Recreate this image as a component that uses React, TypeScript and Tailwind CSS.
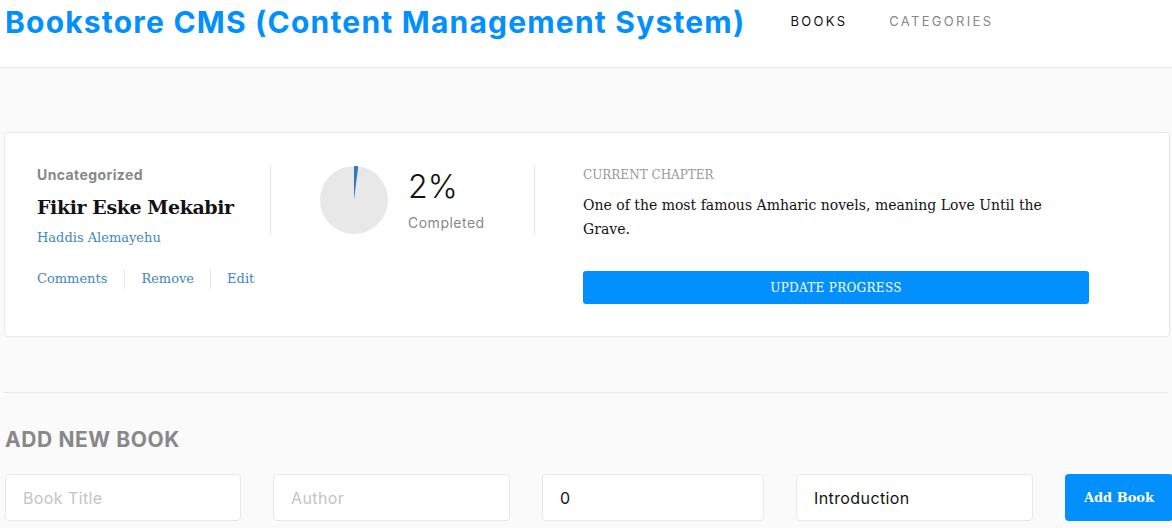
import React from 'react'

const slab = "font-['DejaVu_Serif',serif]"
const geo = "font-['Inter',sans-serif]"

function Pie({ percent }: { percent: number }) {
  const r = 34
  const c = 35
  const a = (percent / 100) * Math.PI * 2
  const x = c + r * Math.sin(a)
  const y = c - r * Math.cos(a)
  return (
    <svg width="70" height="70" viewBox="0 0 70 70">
      <circle cx={c} cy={c} r={r} fill="#e8e8e8" />
      <path d={`M${c} ${c} L${c} ${c - r} A${r} ${r} 0 0 1 ${x} ${y} Z`} fill="#307bbe" />
    </svg>
  )
}

const inputs = [
  { label: 'Book Title', value: '', w: 'w-[236px]' },
  { label: 'Author', value: '', w: 'w-[237px]' },
  { label: '', value: '0', w: 'w-[222px]' },
  { label: '', value: 'Introduction', w: 'w-[237px]' },
]

export default function App() {
  return (
    <div className="min-h-[528px] w-[1172px] bg-[#fafafa] overflow-hidden">
      <header className="h-[68px] bg-white border-b border-[#e8e8e8] flex items-start pl-[5px] pt-[4px]">
        <h1 className={`${geo} shrink-0 text-[30px] font-bold text-[#0290ff] leading-[36px] tracking-[1.2px] whitespace-nowrap`}>
          Bookstore CMS (Content Management System)
        </h1>
        <nav className={`${geo} flex gap-[42px] ml-[45px] mt-[8px] text-[13px] tracking-[2.3px] whitespace-nowrap`}>
          <span className="text-[#121212]">BOOKS</span>
          <span className="text-[#888]">CATEGORIES</span>
        </nav>
      </header>

      <main className="px-[4px]">
        <div className="mt-[64px] h-[205px] w-[1166px] bg-white border border-[#e8e8e8] rounded-[4px] flex items-start pt-[32px] pl-[32px]">
          <div className="w-[234px] border-r border-[#e8e8e8] h-[70px] flex flex-col">
            <span className={`${geo} text-[14px] font-bold text-[#888] leading-[18px] mt-[1px] tracking-[0.4px]`}>Uncategorized</span>
            <span className={`${slab} text-[19px] font-bold text-[#121212] leading-[24px] mt-[11px] tracking-[-0.4px] whitespace-nowrap`}>Fikir Eske Mekabir</span>
            <span className={`${slab} text-[13px] font-light text-[#4386bf] leading-[18px] mt-[10px]`}>Haddis Alemayehu</span>
            <div className={`${slab} flex items-center text-[13px] text-[#4386bf] mt-[22px] leading-[20px] whitespace-nowrap`}>
              <span className="pr-[17px] border-r border-[#e8e8e8]">Comments</span>
              <span className="px-[16px] border-r border-[#e8e8e8]">Remove</span>
              <span className="pl-[16px]">Edit</span>
            </div>
          </div>

          <div className="w-[264px] h-[70px] border-r border-[#e8e8e8] flex items-center pl-[48px]">
            <Pie percent={2} />
            <div className="ml-[19px] flex flex-col">
              <span className={`${geo} text-[32px] font-light text-[#121212] leading-[38px]`}>2%</span>
              <span className={`${geo} text-[14px] text-[#888] leading-[18px] mt-[8px] tracking-[0.5px]`}>Completed</span>
            </div>
          </div>

          <div className="pl-[48px] w-[554px]">
            <div className={`${slab} text-[12px] font-light text-[#999] leading-[16px] mt-[2px]`}>CURRENT CHAPTER</div>
            <div className={`${slab} text-[14px] font-light text-[#121212] leading-[24px] mt-[10px] w-[480px]`}>
              One of the most famous Amharic novels, meaning Love Until the Grave.
            </div>
            <button className={`${slab} mt-[30px] w-[506px] h-[33px] bg-[#0290ff] rounded-[3px] text-white text-[12px] font-light tracking-[0.3px]`}>
              UPDATE PROGRESS
            </button>
          </div>
        </div>

        <div className="mt-[55px] border-t border-[#e8e8e8]" />

        <h2 className={`${geo} mt-[33px] pl-[1px] text-[21px] font-bold text-[#888] leading-[28px] tracking-[0.6px]`}>ADD NEW BOOK</h2>

        <form className="mt-[20px] flex gap-[32px] pl-[1px]">
          {inputs.map((f, i) => (
            <div
              key={i}
              className={`${f.w} ${geo} shrink-0 h-[47px] bg-white border border-[#e8e8e8] rounded-[4px] flex items-center pl-[17px] text-[16px] tracking-[0.4px] ${f.value ? 'text-[#121212]' : 'text-[#c4c4c4]'}`}
            >
              {f.value || f.label}
            </div>
          ))}
          <button className={`${slab} shrink-0 w-[108px] h-[47px] bg-[#0290ff] rounded-[4px] text-white text-[13px] font-bold`}>
            Add Book
          </button>
        </form>
      </main>
    </div>
  )
}
